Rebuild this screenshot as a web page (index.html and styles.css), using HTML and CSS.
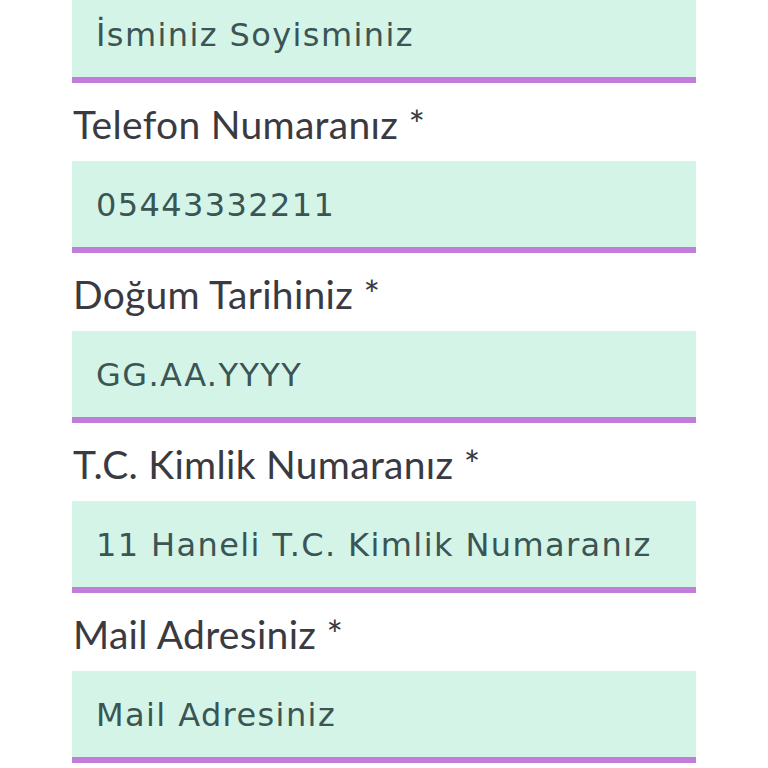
FILE: index.html
```html
<!DOCTYPE html>
<html lang="tr">
<head>
<meta charset="utf-8">
<title>Form</title>
<link rel="stylesheet" href="styles.css">
</head>
<body>
<form class="form">
  <div class="field field-first">
    <input class="input" type="text" placeholder="İsminiz Soyisminiz">
  </div>
  <div class="field">
    <label class="label">Telefon Numaranız *</label>
    <input class="input" type="text" placeholder="05443332211">
  </div>
  <div class="field">
    <label class="label">Doğum Tarihiniz *</label>
    <input class="input" type="text" placeholder="GG.AA.YYYY">
  </div>
  <div class="field">
    <label class="label">T.C. Kimlik Numaranız *</label>
    <input class="input" type="text" placeholder="11 Haneli T.C. Kimlik Numaranız">
  </div>
  <div class="field">
    <label class="label">Mail Adresiniz *</label>
    <input class="input" type="text" placeholder="Mail Adresiniz">
  </div>
</form>
</body>
</html>
```
FILE: styles.css
```css
html, body {
  margin: 0;
  padding: 0;
  background: #ffffff;
}
.form {
  width: 624px;
  margin: -9px 0 0 72px;
  display: flex;
  flex-direction: column;
}
.field {
  display: flex;
  flex-direction: column;
}
.label {
  height: 78px;
  display: flex;
  align-items: center;
  padding-top: 4px;
  box-sizing: border-box;
  font-family: "Lato", sans-serif;
  font-size: 39px;
  font-weight: 400;
  color: #3a3a42;
  padding-left: 1px;
  letter-spacing: 0.3px;
}
.input {
  display: block;
  width: 100%;
  height: 92px;
  box-sizing: border-box;
  margin: 0;
  border: none;
  border-bottom: 6px solid #c27ddb;
  background: #d4f4e8;
  padding: 2px 0 0 24px;
  font-family: "DejaVu Sans", sans-serif;
  font-size: 32px;
  font-weight: 400;
  letter-spacing: 1.4px;
  color: #3b5555;
  outline: none;
}
.input::placeholder {
  color: #3b5555;
  opacity: 1;
}
```
